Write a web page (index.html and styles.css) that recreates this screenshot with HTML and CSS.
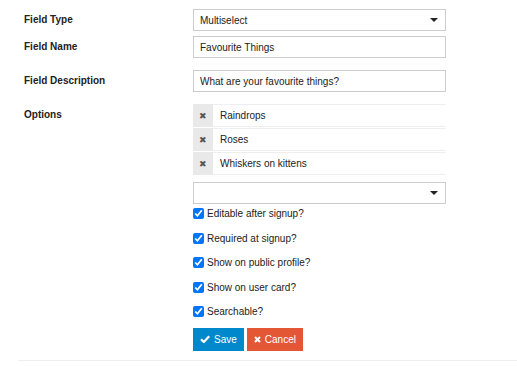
FILE: index.html
```html
<!DOCTYPE html>
<html lang="en">
<head>
  <meta charset="UTF-8" />
  <title>User Field</title>
  <link rel="stylesheet" href="styles.css">
</head>
<body>

  <div class="user-field">

    <div class="row row-type">
      <div class="label">Field Type</div>
      <div class="control">
        <div class="combo">
          <span>Multiselect</span>
          <span class="caret"></span>
        </div>
      </div>
    </div>

    <div class="row row-name">
      <div class="label">Field Name</div>
      <div class="control">
        <input class="text-input" type="text" value="Favourite Things">
      </div>
    </div>

    <div class="row row-desc">
      <div class="label">Field Description</div>
      <div class="control">
        <input class="text-input" type="text" value="What are your favourite things?">
      </div>
    </div>

    <div class="row row-options">
      <div class="label">Options</div>
      <div class="control">
        <div class="option">
          <button class="remove">&#x2716;</button>
          <div class="option-value">Raindrops</div>
        </div>
        <div class="option">
          <button class="remove">&#x2716;</button>
          <div class="option-value">Roses</div>
        </div>
        <div class="option">
          <button class="remove">&#x2716;</button>
          <div class="option-value">Whiskers on kittens</div>
        </div>

        <div class="combo combo-empty">
          <span></span>
          <span class="caret"></span>
        </div>

        <label class="check"><input type="checkbox" checked> Editable after signup?</label>
        <label class="check"><input type="checkbox" checked> Required at signup?</label>
        <label class="check"><input type="checkbox" checked> Show on public profile?</label>
        <label class="check"><input type="checkbox" checked> Show on user card?</label>
        <label class="check"><input type="checkbox" checked> Searchable?</label>

        <div class="buttons">
          <button class="btn btn-save">
            <svg width="10" height="8" viewBox="0 0 10 8"><path d="M1 4.2 L3.8 7 L9.2 1.2" fill="none" stroke="white" stroke-width="2.2"/></svg>
            Save
          </button>
          <button class="btn btn-cancel">
            <svg width="7" height="7" viewBox="0 0 7 7"><path d="M1 1 L6 6 M6 1 L1 6" fill="none" stroke="white" stroke-width="2"/></svg>
            Cancel
          </button>
        </div>
      </div>
    </div>

  </div>

</body>
</html>
```

FILE: styles.css
```css
body {
  margin: 0;
  font-family: "Liberation Sans", Arial, sans-serif;
  font-size: 10px;
  color: #222;
  background: white;
}

.user-field {
  margin-left: 18px;
  padding-top: 9px;
  padding-bottom: 9px;
  border-bottom: 1px solid #eee;
}

.row {
  display: flex;
  padding-left: 6px;
}

.label {
  width: 169px;
  font-weight: bold;
  line-height: 22px;
}

.control {
  width: 253px;
}

.row-type {
  margin-bottom: 5px;
}

.row-name,
.row-desc {
  margin-bottom: 12px;
}

.combo {
  height: 22px;
  box-sizing: border-box;
  border: 1px solid #ccc;
  display: flex;
  align-items: center;
  justify-content: space-between;
  padding: 0 7px 0 6px;
}

.caret {
  width: 0;
  height: 0;
  border-left: 4px solid transparent;
  border-right: 4px solid transparent;
  border-top: 4px solid #222;
}

.text-input {
  width: 100%;
  height: 22px;
  box-sizing: border-box;
  border: 1px solid #ccc;
  padding: 0 6px;
  margin: 0;
  font-family: inherit;
  font-size: 10px;
  color: #222;
}

.option {
  display: flex;
  height: 23px;
  margin-bottom: 1px;
}

.remove {
  width: 20px;
  border: none;
  background: #e9e9e9;
  color: #555;
  font-size: 9px;
  padding: 0;
  margin: 0;
}

.option-value {
  flex: 1;
  border-top: 1px solid #eee;
  border-bottom: 1px solid #eee;
  line-height: 21px;
  padding-left: 7px;
}

.combo-empty {
  margin-top: 7px;
  margin-bottom: 1px;
}

.check {
  display: flex;
  align-items: center;
  height: 17px;
  margin-bottom: 7.5px;
}

.check input {
  width: 11px;
  height: 11px;
  margin: 0 3px 0 0;
}

.buttons {
  display: flex;
  gap: 3px;
  margin-top: 4px;
}

.btn {
  height: 23px;
  border: none;
  color: white;
  font-family: inherit;
  font-size: 10px;
  display: flex;
  align-items: center;
  gap: 4px;
  padding: 0 7px;
}

.btn-save {
  background: #0088cc;
}

.btn-cancel {
  background: #e45735;
}
```
